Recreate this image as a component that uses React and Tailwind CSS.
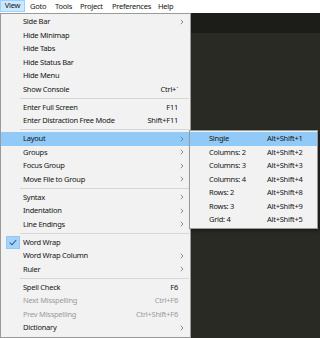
import React from "react";

const FONT = { fontFamily: '"Noto Sans", "Open Sans", sans-serif' };

const Chevron = () => (
  <svg width="4" height="6" viewBox="0 0 4 6" className="block">
    <path d="M0.8 0.8 L3 3 L0.8 5.2" fill="none" stroke="#777" strokeWidth="0.85" />
  </svg>
);

const Check = () => (
  <svg width="8" height="7" viewBox="0 0 8 7" className="block">
    <path d="M0.8 3.6 L3 5.8 L7.2 1" fill="none" stroke="#1d5ea3" strokeWidth="1.1" />
  </svg>
);

const items = [
  { l: "Side Bar", sub: true },
  { l: "Hide Minimap" },
  { l: "Hide Tabs" },
  { l: "Hide Status Bar" },
  { l: "Hide Menu" },
  { l: "Show Console", k: "Ctrl+`" },
  "sep",
  { l: "Enter Full Screen", k: "F11" },
  { l: "Enter Distraction Free Mode", k: "Shift+F11" },
  "sep",
  { l: "Layout", sub: true, active: true },
  { l: "Groups", sub: true },
  { l: "Focus Group", sub: true },
  { l: "Move File to Group", sub: true },
  "sep",
  { l: "Syntax", sub: true },
  { l: "Indentation", sub: true },
  { l: "Line Endings", sub: true },
  "sep",
  { l: "Word Wrap", check: true },
  { l: "Word Wrap Column", sub: true },
  { l: "Ruler", sub: true },
  "sep",
  { l: "Spell Check", k: "F6" },
  { l: "Next Misspelling", k: "Ctrl+F6", dis: true },
  { l: "Prev Misspelling", k: "Ctrl+Shift+F6", dis: true },
  { l: "Dictionary", sub: true },
];

const subItems = [
  { l: "Single", k: "Alt+Shift+1", active: true },
  { l: "Columns: 2", k: "Alt+Shift+2" },
  { l: "Columns: 3", k: "Alt+Shift+3" },
  { l: "Columns: 4", k: "Alt+Shift+4" },
  { l: "Rows: 2", k: "Alt+Shift+8" },
  { l: "Rows: 3", k: "Alt+Shift+9" },
  { l: "Grid: 4", k: "Alt+Shift+5" },
];

export default function App() {
  return (
    <div
      className="relative w-[320px] h-[338px] overflow-hidden bg-white text-[7.5px] leading-none tracking-[-0.25px] text-[#141414]"
      style={FONT}
    >
      {/* menu bar */}
      <div className="flex h-[13px] items-center bg-white">
        <div className="flex h-[12px] w-[25px] items-center justify-center self-start border border-[#99d1ff] bg-[#cce8ff]">
          View
        </div>
        <div className="ml-[5px] flex whitespace-nowrap">
          <span className="w-[25px]">Goto</span>
          <span className="w-[25px]">Tools</span>
          <span className="w-[32px]">Project</span>
          <span className="w-[46px]">Preferences</span>
          <span>Help</span>
        </div>
      </div>

      {/* editor */}
      <div className="flex h-[325px] flex-col">
        <div className="h-[20px] bg-[#1c1c19]" />
        <div className="flex-1 bg-[#2a2a25]" />
      </div>

      {/* main dropdown */}
      <div className="absolute left-0 top-[13px] w-[191px] border border-[#9a9a9a] bg-[#f2f2f2] pt-[1px] pb-[2px]">
        {items.map((it, i) =>
          it === "sep" ? (
            <div key={i} className="flex h-[4.5px] items-center pl-[19px] pr-[1px]">
              <div className="h-px flex-1 bg-[#d7d7d7]" />
            </div>
          ) : (
            <div
              key={i}
              className={`relative flex h-[13.5px] items-center ${it.active ? "bg-[#91c9f7]" : ""} ${it.dis ? "text-[#9a9a9a]" : ""}`}
            >
              <div className="flex w-[22px] items-center justify-center pl-[1px]">
                {it.check && (
                  <div className="flex h-[13px] w-[14px] items-center justify-center border border-[#90c8f6] bg-[#a8d3f6]">
                    <Check />
                  </div>
                )}
              </div>
              <div className="flex-1 whitespace-nowrap">{it.l}</div>
              <div className="whitespace-nowrap">{it.k}</div>
              <div className="flex w-[12px] items-center pl-[2px]">{it.sub && <Chevron />}</div>
            </div>
          )
        )}
      </div>

      {/* submenu */}
      <div className="absolute left-[189px] top-[130px] w-[129px] border border-[#9a9a9a] bg-[#f2f2f2] py-[1px] shadow-[2px_2px_3px_rgba(0,0,0,0.35)]">
        {subItems.map((it, i) => (
          <div
            key={i}
            className={`flex h-[13.5px] items-center whitespace-nowrap ${it.active ? "bg-[#91c9f7]" : ""}`}
          >
            <div className="w-[77px] pl-[19px]">{it.l}</div>
            <div>{it.k}</div>
          </div>
        ))}
      </div>
    </div>
  );
}
